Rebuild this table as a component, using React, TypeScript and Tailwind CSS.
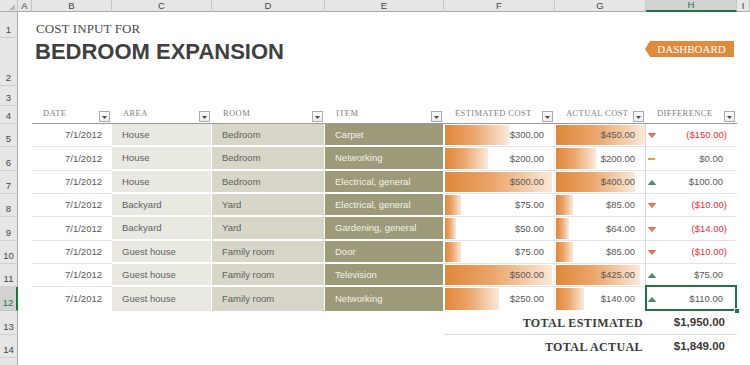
import React from "react";

type Entry = {
  date: string;
  area: string;
  room: string;
  item: string;
  est: number;
  act: number;
};

const entries: Entry[] = [
  { date: "7/1/2012", area: "House", room: "Bedroom", item: "Carpet", est: 300, act: 450 },
  { date: "7/1/2012", area: "House", room: "Bedroom", item: "Networking", est: 200, act: 200 },
  { date: "7/1/2012", area: "House", room: "Bedroom", item: "Electrical, general", est: 500, act: 400 },
  { date: "7/1/2012", area: "Backyard", room: "Yard", item: "Electrical, general", est: 75, act: 85 },
  { date: "7/1/2012", area: "Backyard", room: "Yard", item: "Gardening, general", est: 50, act: 64 },
  { date: "7/1/2012", area: "Guest house", room: "Family room", item: "Door", est: 75, act: 85 },
  { date: "7/1/2012", area: "Guest house", room: "Family room", item: "Television", est: 500, act: 425 },
  { date: "7/1/2012", area: "Guest house", room: "Family room", item: "Networking", est: 250, act: 140 },
];

const letters = ["A", "B", "C", "D", "E", "F", "G", "H", "I"];

// row heights for rows 1..14 of the sheet
const rowHeights = [26, 48, 20, 18, 23, 24, 23, 23, 24, 23, 23, 24, 24, 23];
const dataRowHeights = rowHeights.slice(4, 12);

const cols = "grid grid-cols-[14px_80px_100px_113px_119px_111px_91px_91px_1fr]";
const dataFont = "font-['Liberation_Sans',Arial,sans-serif] text-[9.5px]";

const money = (n: number) =>
  "$" +
  Math.abs(n).toLocaleString("en-US", {
    minimumFractionDigits: 2,
    maximumFractionDigits: 2,
  });

const maxEst = Math.max(...entries.map((e) => e.est));
const maxAct = Math.max(...entries.map((e) => e.act));

function ColumnHeader() {
  return (
    <div className="flex h-[12px] shrink-0 border-b border-[#ababab] bg-[#e6e6e6]">
      <div className="flex w-[18px] shrink-0 items-end justify-end border-r border-[#c6c6c6] pb-[1px] pr-[2px]">
        <svg width="6" height="6" viewBox="0 0 6 6">
          <path d="M6 0V6H0Z" fill="#b9b9b9" />
        </svg>
      </div>
      <div className={`flex-1 ${cols}`}>
        {letters.map((l) => (
          <div
            key={l}
            className={
              l === "H"
                ? "flex items-center justify-center border-r border-b-2 border-r-[#c6c6c6] border-b-[#217346] bg-[#d2d2d2] text-[9.5px] leading-none text-[#217346]"
                : "flex items-center justify-center border-r border-[#c6c6c6] text-[9.5px] leading-none text-[#444]"
            }
          >
            {l}
          </div>
        ))}
      </div>
    </div>
  );
}

function RowHeaders() {
  return (
    <div className="flex w-[18px] shrink-0 flex-col border-r border-[#ababab] bg-[#e6e6e6]">
      {rowHeights.map((h, i) => {
        const active = i === 11;
        return (
          <div
            key={i}
            style={{ height: h }}
            className={
              active
                ? "-mr-[1px] flex shrink-0 items-end justify-center border-b border-r-2 border-b-[#c6c6c6] border-r-[#217346] bg-[#d2d2d2] pb-[1px] text-[9.5px] leading-[12px] text-[#217346]"
                : "flex shrink-0 items-end justify-center border-b border-[#d0d0d0] pb-[1px] text-[9.5px] leading-[12px] text-[#444]"
            }
          >
            {i + 1}
          </div>
        );
      })}
      <div className="flex-1" />
    </div>
  );
}

function FilterButton() {
  return (
    <div className="flex h-[11px] w-[11px] shrink-0 items-center justify-center border border-[#ababab] bg-[linear-gradient(#ffffff,#ececec)] pt-[1px]">
      <svg width="5" height="3" viewBox="0 0 5 3">
        <path d="M0 0H5L2.5 3Z" fill="#4a4a4a" />
      </svg>
    </div>
  );
}

function HeaderCell({ label }: { label: string }) {
  return (
    <div className="flex items-end justify-between border-b border-[#9a9a9a] pb-[1px] pl-[11px] pr-[2px]">
      <span className="mb-[1px] self-center font-['Liberation_Serif',serif] text-[8.5px] leading-none tracking-[0.4px] text-[#7f7f7f]">
        {label}
      </span>
      <FilterButton />
    </div>
  );
}

function DiffIcon({ d }: { d: number }) {
  if (d < 0)
    return (
      <svg width="8" height="5" viewBox="0 0 8 5">
        <path d="M0.5 0.5H7.5L4 4.5Z" fill="#ec7a5c" stroke="#d2573c" strokeWidth="0.8" />
      </svg>
    );
  if (d > 0)
    return (
      <svg width="8" height="5" viewBox="0 0 8 5">
        <path d="M4 0.5L7.5 4.5H0.5Z" fill="#4c9a63" stroke="#2f7a48" strokeWidth="0.8" />
      </svg>
    );
  return <div className="h-[2px] w-[7px] bg-[#eb963c]" />;
}

function BarCell({
  value,
  max,
  width,
  last,
  line,
}: {
  value: number;
  max: number;
  width: number;
  last: boolean;
  line: string;
}) {
  const w = Math.round((value / max) * width);
  return (
    <div
      className={`flex items-center justify-end bg-[linear-gradient(90deg,#e0873a_0%,#eba66b_45%,#fbe9da_100%)] bg-no-repeat pr-[10px] pt-[1px] text-[#595959] ${line} ${
        last ? "" : "border-b border-b-[#e3e3e3]"
      }`}
      style={{ backgroundSize: `${w}px calc(100% - 2px)`, backgroundPosition: "1px 1px" }}
    >
      {money(value)}
    </div>
  );
}

function DataRow({ e, h, last, selected }: { e: Entry; h: number; last: boolean; selected: boolean }) {
  const diff = e.est - e.act;
  const lineB = last ? "" : "border-b border-[#e3e3e3]";
  const lineTint = last ? "border-r border-white" : "border-b-2 border-r border-white";
  return (
    <div style={{ height: h }} className={`${cols} shrink-0 ${dataFont}`}>
      <div />
      <div className={`flex items-center justify-end pr-[10px] pt-[1px] text-[#595959] ${lineB}`}>{e.date}</div>
      <div className={`flex items-center bg-[#e9e8e1] pl-[10px] pt-[1px] text-[#616161] ${lineTint}`}>{e.area}</div>
      <div className={`flex items-center bg-[#d7d6c8] pl-[10px] pt-[1px] text-[#5e5e5e] ${lineTint}`}>{e.room}</div>
      <div className={`flex items-center bg-[#9d9a79] pl-[10px] pt-[1px] text-[#f3f2ea] ${lineTint}`}>{e.item}</div>
      <BarCell value={e.est} max={maxEst} width={107} last={last} line="border-r border-r-[#ececec]" />
      <BarCell value={e.act} max={maxAct} width={89} last={last} line="border-r border-r-[#d9d9d9]" />
      <div className={`relative flex items-center pl-[2px] pt-[1px] ${lineB}`}>
        <DiffIcon d={diff} />
        <span className={`ml-auto ${diff < 0 ? "pr-[10px] text-[#f0303a]" : "pr-[14px] text-[#595959]"}`}>
          {diff < 0 ? `(${money(diff)})` : money(diff)}
        </span>
        {selected && (
          <>
            <div className="absolute -left-[1px] -top-[2px] bottom-0 right-0 border-2 border-[#217346]" />
            <div className="absolute -bottom-[3px] -right-[3px] h-[6px] w-[6px] border border-white bg-[#217346]" />
          </>
        )}
      </div>
      <div />
    </div>
  );
}

function TotalRow({ label, value, h, line }: { label: string; value: number; h: number; line: boolean }) {
  const border = line ? "border-b border-[#dcdcdc]" : "";
  return (
    <div style={{ height: h }} className={`${cols} shrink-0`}>
      <div className="col-span-5" />
      <div
        className={`col-span-2 flex items-center justify-end pr-[3px] font-['Liberation_Serif',serif] text-[12px] font-bold tracking-[0.4px] text-[#3a3a3a] ${border}`}
      >
        {label}
      </div>
      <div
        className={`flex items-center justify-end pr-[12px] font-['Liberation_Sans',Arial,sans-serif] text-[11.5px] font-bold text-[#3a3a3a] ${border}`}
      >
        {money(value)}
      </div>
      <div />
    </div>
  );
}

function Sheet() {
  const totalEst = entries.reduce((s, e) => s + e.est, 0);
  const totalAct = entries.reduce((s, e) => s + e.act, 0);
  return (
    <div className="relative flex flex-1 flex-col bg-white">
      {/* row 1 */}
      <div style={{ height: rowHeights[0] }} className={`${cols} shrink-0`}>
        <div />
        <div className="col-span-7 flex items-end pb-[1px] pl-[4px]">
          <span className="font-['Liberation_Serif',serif] text-[13px] leading-[16px] tracking-[0.1px] text-[#4a4a4a]">
            COST INPUT FOR
          </span>
        </div>
      </div>
      {/* row 2 */}
      <div style={{ height: rowHeights[1] }} className={`${cols} shrink-0`}>
        <div />
        <div className="col-span-7 pl-[3px] pt-[2px]">
          <span className="font-['Liberation_Sans',Arial,sans-serif] text-[22px] font-bold leading-[24px] text-[#404040]">
            BEDROOM EXPANSION
          </span>
        </div>
      </div>
      {/* row 3 */}
      <div style={{ height: rowHeights[2] }} className="shrink-0" />
      {/* row 4: table header */}
      <div style={{ height: rowHeights[3] }} className={`${cols} shrink-0`}>
        <div />
        <HeaderCell label="DATE" />
        <HeaderCell label="AREA" />
        <HeaderCell label="ROOM" />
        <HeaderCell label="ITEM" />
        <HeaderCell label="ESTIMATED COST" />
        <HeaderCell label="ACTUAL COST" />
        <HeaderCell label="DIFFERENCE" />
        <div />
      </div>
      {entries.map((e, i) => (
        <DataRow
          key={i}
          e={e}
          h={dataRowHeights[i]}
          last={i === entries.length - 1}
          selected={i === entries.length - 1}
        />
      ))}
      <TotalRow label="TOTAL ESTIMATED" value={totalEst} h={rowHeights[12]} line />
      <TotalRow label="TOTAL ACTUAL" value={totalAct} h={rowHeights[13]} line={false} />
      <div className="flex-1" />

      {/* floating shape: dashboard link */}
      <div className="absolute left-[627px] top-[29px] flex h-[16px] w-[89px] items-center justify-center bg-[#e08a3d] pl-[4px] [clip-path:polygon(5px_0,100%_0,100%_100%,5px_100%,0_50%)]">
        <span className="font-['Liberation_Serif',serif] text-[11px] leading-none text-white">DASHBOARD</span>
      </div>
    </div>
  );
}

export default function App() {
  return (
    <div className="flex h-[365px] w-[750px] flex-col overflow-hidden bg-white font-['Liberation_Sans',Arial,sans-serif]">
      <ColumnHeader />
      <div className="flex flex-1 overflow-hidden">
        <RowHeaders />
        <Sheet />
      </div>
    </div>
  );
}
